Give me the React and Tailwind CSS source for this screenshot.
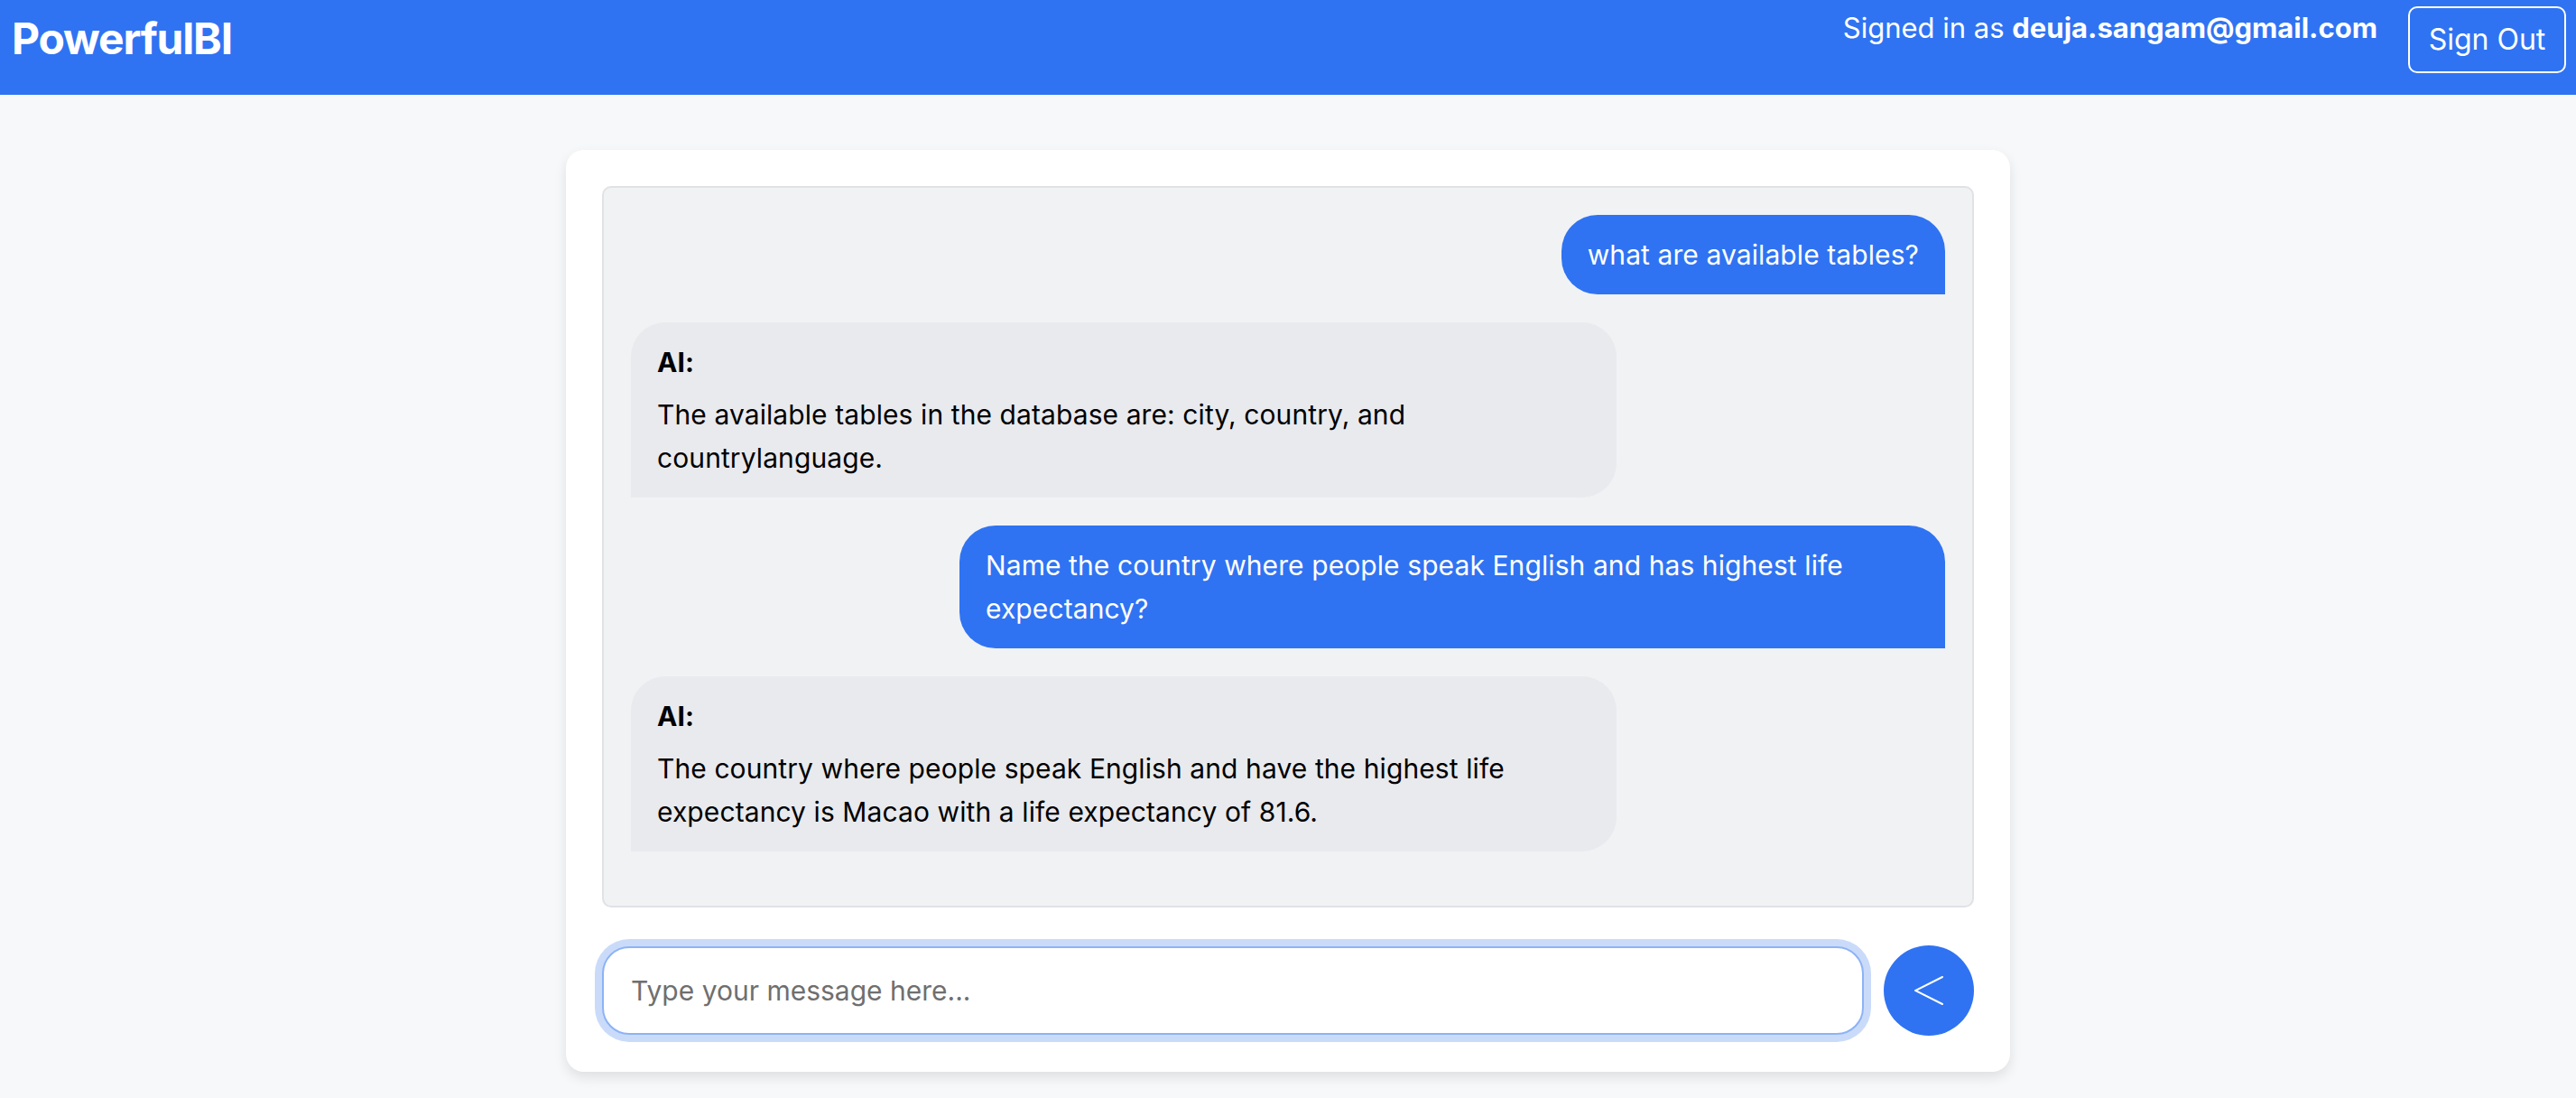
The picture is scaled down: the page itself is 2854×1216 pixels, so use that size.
import React from 'react';

const messages = [
  { from: 'user', text: 'what are available tables?' },
  { from: 'ai', text: 'The available tables in the database are: city, country, and countrylanguage.' },
  { from: 'user', text: 'Name the country where people speak English and has highest life expectancy?' },
  { from: 'ai', text: 'The country where people speak English and have the highest life expectancy is Macao with a life expectancy of 81.6.' }
];

const Header = () => {
  return (
    <div className="h-[105px] bg-[#2f73f2] flex items-start justify-between pt-[7px] pl-[13px] pr-[11px] text-white">
      <h1 className="text-[48px] leading-[72px] font-bold tracking-[-0.025em]">PowerfulBI</h1>
      <div className="flex items-start gap-[34px]">
        <span className="text-[31px] leading-[48px]">
          Signed in as <span className="font-bold">deuja.sangam@gmail.com</span>
        </span>
        <button className="h-[74px] w-[175px] border-2 border-white rounded-[10px] text-[32px] leading-[48px] text-white">
          Sign Out
        </button>
      </div>
    </div>
  );
};

const Bubble = ({ message }) => {
  if (message.from === 'user') {
    return (
      <div className="flex justify-end">
        <div className="max-w-[1092px] bg-[#2f73f2] text-white px-[29px] py-[20px] rounded-t-[40px] rounded-bl-[40px] rounded-br-none">
          {message.text}
        </div>
      </div>
    );
  }
  return (
    <div className="flex justify-start">
      <div className="w-[1092px] bg-[#e9eaee] text-black px-[29px] py-[20px] rounded-t-[38px] rounded-br-[38px] rounded-bl-none">
        <p className="font-bold mb-[10px]">AI:</p>
        <p>{message.text}</p>
      </div>
    </div>
  );
};

const App = () => {
  return (
    <div className="min-h-[1216px] bg-[#f7f8fa] font-['Inter',sans-serif]">
      <Header />
      <div className="flex justify-center pt-[61px]">
        <div className="w-[1600px] bg-white rounded-[20px] shadow-[0_6px_14px_rgba(0,0,0,0.10)] p-[40px]">
          <div className="h-[799px] bg-[#f1f2f4] border-2 border-[#e0e2e6] rounded-[10px] p-[30px] flex flex-col gap-[31px] text-[30px] leading-[48px] tracking-[0.003em]">
            {messages.map((message, index) => (
              <Bubble key={index} message={message} />
            ))}
          </div>
          <div className="flex items-center gap-[22px] mt-[42px]">
            <div className="flex-1 h-[98px] rounded-[30px] border-2 border-[#8cb3f6] ring-[8px] ring-[#cadbfa] bg-white flex items-center px-[30px]">
              <input
                className="w-full outline-none text-[30px] text-black placeholder:text-[#6f6f6f] bg-transparent"
                placeholder="Type your message here..."
              />
            </div>
            <button className="w-[100px] h-[100px] rounded-full bg-[#2f73f2] flex items-center justify-center shrink-0">
              <svg width="32" height="32" viewBox="0 0 32 32" fill="none">
                <polyline points="31,1 1,16 31,31" stroke="white" strokeWidth="2" strokeLinecap="round" strokeLinejoin="miter" />
              </svg>
            </button>
          </div>
        </div>
      </div>
    </div>
  );
};

export default App;
